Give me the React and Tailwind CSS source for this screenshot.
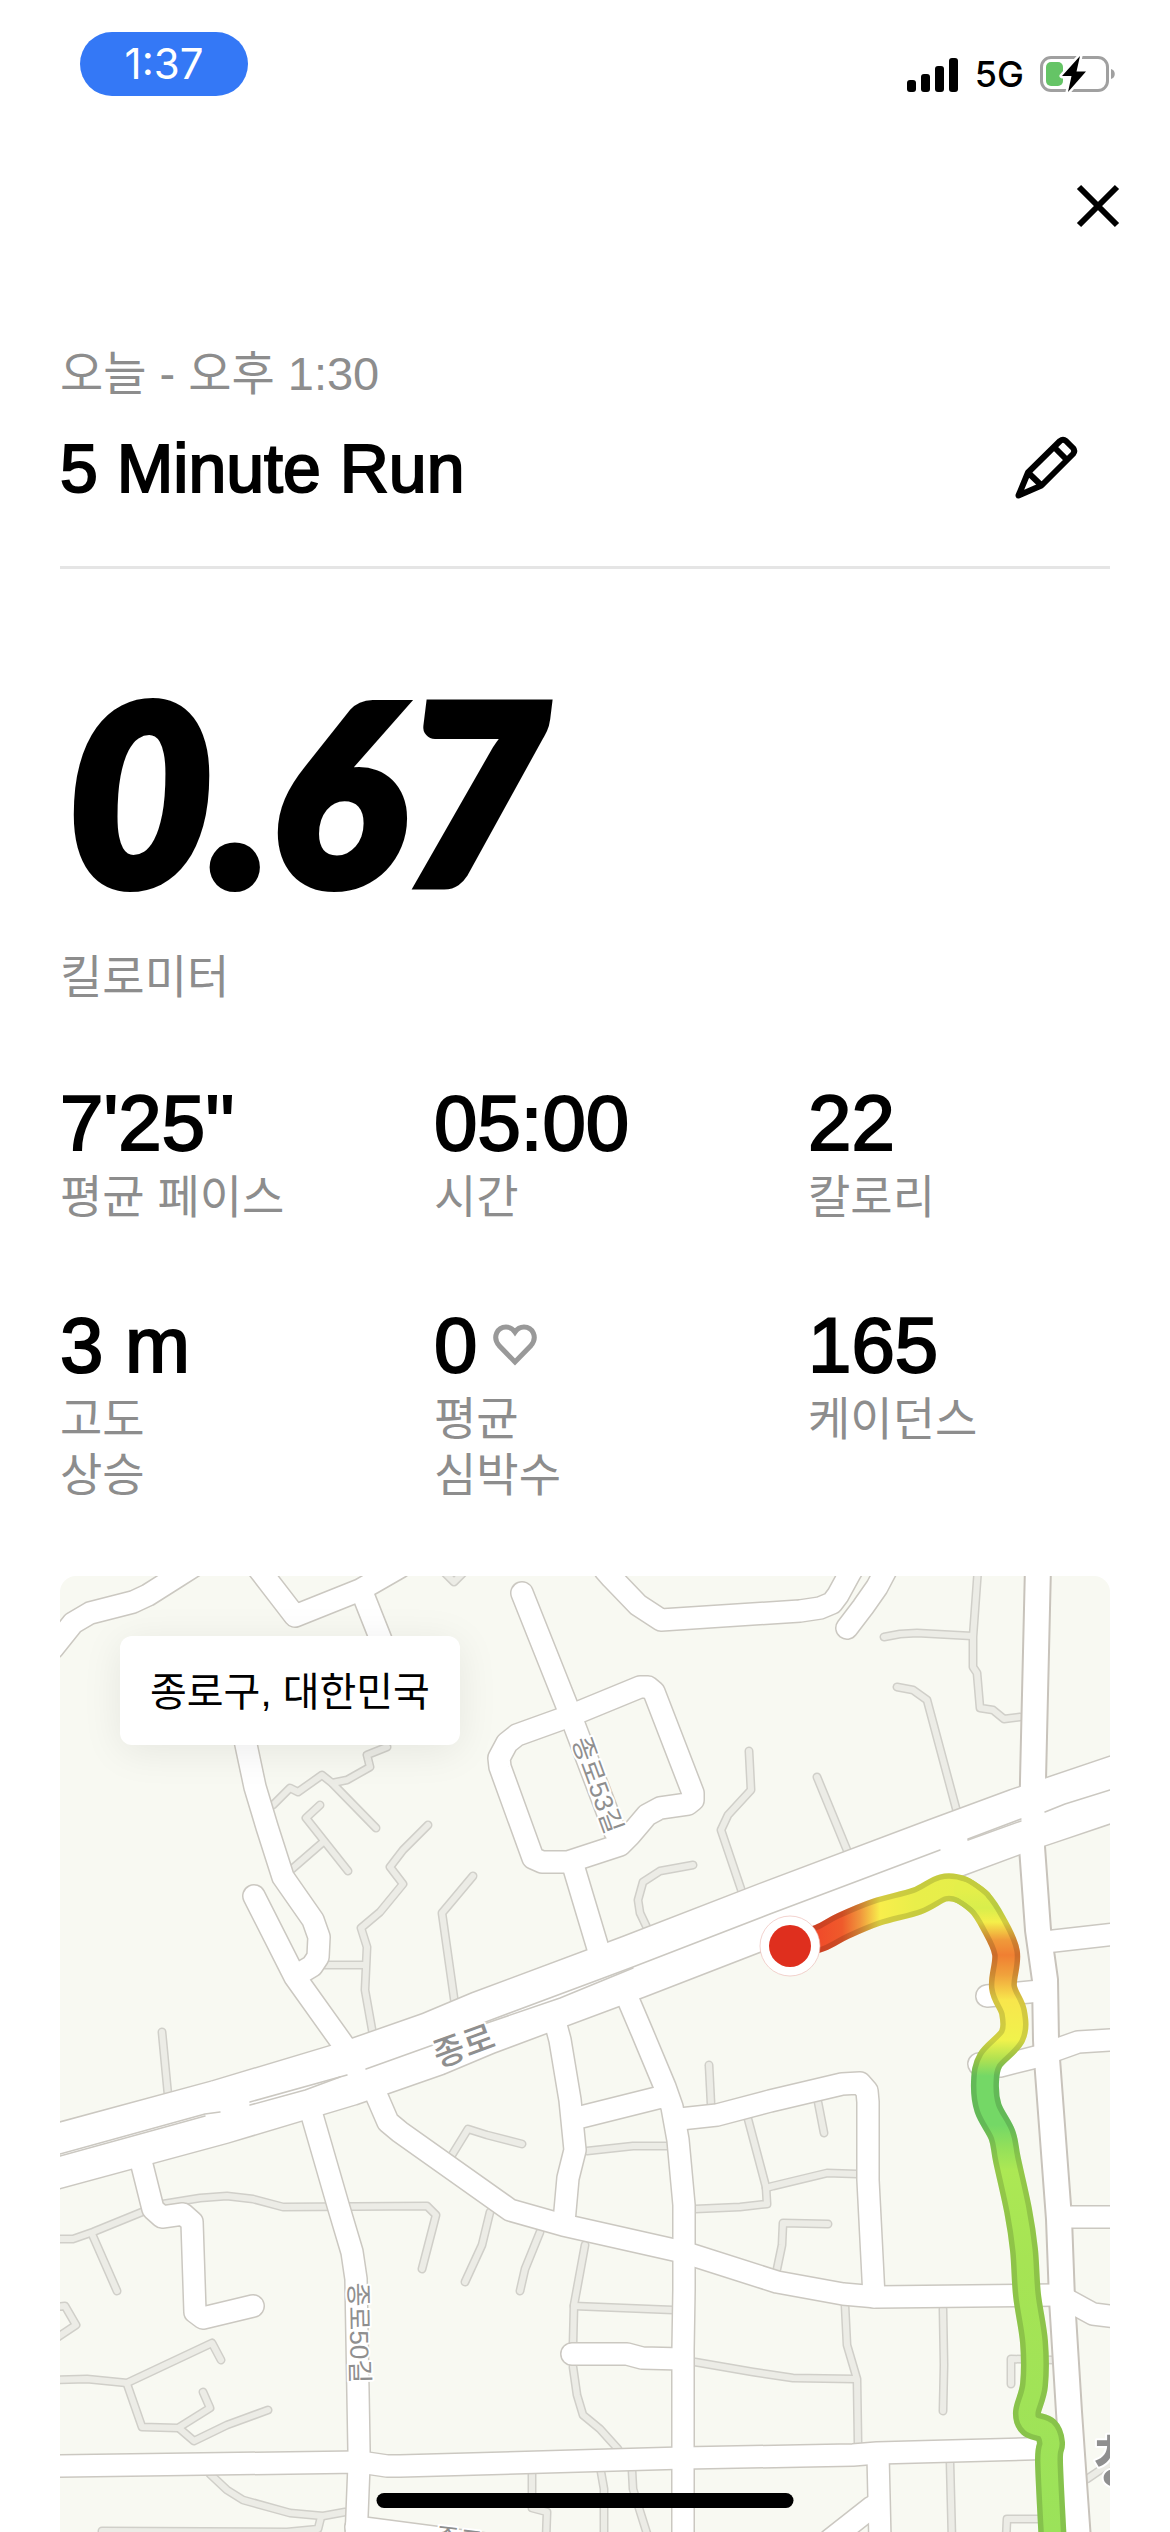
const stats = [
  { value: "7'25''", label: "평균 페이스" },
  { value: "05:00", label: "시간" },
  { value: "22", label: "칼로리" },
  { value: "3 m", label: "고도\n상승" },
  { value: "0", label: "평균\n심박수", heart: true },
  { value: "165", label: "케이던스" },
];

const alleys = [
  "273,1805 290,1788 298,1792 322,1775 332,1783 347,1780 370,1767 367,1755 387,1747",
  "333,1784 376,1828",
  "320,1805 306,1818 348,1871",
  "322,1843 292,1869",
  "428,1825 403,1850 390,1867 403,1884 380,1912 361,1928 367,1947 365,1990 373,2035",
  "325,1965 365,1965",
  "162,2032 168,2095",
  "440,1568 454,1582 468,1568",
  "473,1876 442,1913 455,2005",
  "749,1751 751,1790 728,1815 721,1830 743,1895",
  "693,1865 660,1871 643,1882 638,1900 640,1913 649,1932",
  "884,1637 900,1634 917,1633 972,1636",
  "978,1568 973,1637 973,1667 977,1673 980,1708 993,1710 1004,1719 1020,1717",
  "897,1687 913,1690 927,1700 957,1812",
  "817,1777 849,1855",
  "55,2239 73,2239 93,2232 147,2210",
  "92,2234 117,2291",
  "163,2204 200,2198 227,2196 253,2199 283,2207 427,2206 436,2215 422,2269",
  "55,2307 65,2306 76,2325 58,2337",
  "55,2380 87,2379 127,2383 212,2343 221,2360",
  "127,2384 142,2427 178,2428 210,2408 203,2392",
  "180,2429 194,2441 227,2425 268,2410",
  "210,2474 227,2490 243,2500 290,2513 323,2516 345,2512",
  "321,2517 318,2529 287,2532 102,2531",
  "452,2155 468,2129 487,2135 522,2144",
  "490,2212 482,2245 465,2282",
  "540,2232 525,2269 520,2291",
  "585,2245 574,2305 573,2345",
  "574,2306 673,2310",
  "573,2367 577,2395 583,2415 600,2429 618,2449",
  "587,2151 633,2146 667,2146",
  "709,2065 711,2104",
  "748,2119 766,2187 767,2204 740,2207 695,2209",
  "766,2188 773,2186 827,2173 857,2174",
  "777,2269 782,2245 783,2223 828,2224",
  "695,2362 753,2372 793,2378 855,2379",
  "845,2305 847,2345 857,2379 858,2443",
  "943,2309 944,2365 943,2411",
  "818,2102 824,2133",
  "1011,2384 1011,2359 1053,2360",
  "950,2462 952,2540",
  "1006,2540 1007,2519 1040,2519",
  "1087,2479 1115,2460",
  "532,2473 532,2508 547,2512 546,2540",
  "601,2472 604,2489 604,2540",
  "632,2470 633,2489 649,2540",
];

const streets = [
  "53,1648 73,1623 90,1613 133,1602 148,1595 178,1576 200,1562",
  "258,1568 295,1616 360,1590 400,1567",
  "362,1592 385,1650",
  "244,1700 245,1740 255,1787 267,1827 283,1877 313,1920 319,1937 318,1957 312,1966 297,1975",
  "254,1896 295,1977 345,2047 362,2072",
  "522,1593 567,1706 615,1832",
  "567,1717 640,1687 648,1687 654,1692 693,1793 693,1800 688,1804 660,1808 647,1815 630,1835 620,1845 568,1862 542,1862 533,1858 500,1767 499,1758 507,1743 517,1735 567,1717",
  "573,1865 600,1955",
  "605,1570 612,1578 638,1605 661,1620 800,1611 820,1608 832,1603 838,1595 850,1573 858,1560",
  "847,1628 863,1607 877,1587 887,1568",
  "137,2145 153,2209 162,2217 183,2214 192,2222 195,2312 203,2318 253,2306",
  "312,2115 338,2205 352,2252 356,2279 359,2450 359,2465 356,2540",
  "356,2527 440,2538 500,2546",
  "55,2466 360,2462 387,2466 400,2466 683,2458 800,2456 853,2455 877,2453 1060,2448",
  "372,2085 388,2122 400,2132 510,2210 563,2225 683,2252 777,2282 843,2294 877,2297 1055,2295",
  "552,2010 560,2040 570,2100 575,2150 568,2178 564,2222",
  "622,1985 642,2032 665,2087 672,2107 678,2140 684,2205 684,2290 683,2350 683,2540",
  "577,2118 665,2096",
  "680,2119 717,2115 770,2101 842,2084 860,2083 867,2091 868,2102 868,2180 874,2297",
  "878,2455 880,2540",
  "872,2507 830,2540",
  "572,2354 627,2354 642,2358 682,2359",
  "1045,1942 1125,1933",
  "1050,2052 1078,2042 1125,2039",
  "1065,2217 1125,2217",
  "1060,2296 1093,2314 1125,2318",
  "987,1996 1040,1991",
  "979,2064 1000,2066 1040,2056",
];

const avenue =
  "1038,1566 1033,1780 1032,1847 1038,1930 1045,1980 1046,2040 1047,2059 1059,2219 1062,2299 1069,2412 1078,2540";

const jongno =
  "50,2158 220,2112 347,2074 433,2044 483,2023 633,1967 770,1914 940,1850 1021,1820 1045,1812 1125,1785";

const jongnoMedian = [
  "60,2154 205,2114 220,2112",
  "60,2156 205,2116",
  "250,2102 347,2075",
  "250,2105 305,2090 340,2077",
  "366,2069 433,2045",
  "483,2023 633,1967 770,1914 940,1850",
  "484,2024 560,1998 633,1968",
  "968,1839 1021,1819",
  "968,1840 1021,1821",
  "1045,1812 1065,1804 1110,1790",
];

const routeWest = [
  [790, 1946],
  [820, 1938],
  [843, 1926],
  [877, 1912],
  [917, 1901],
  [943, 1888],
  [962, 1890],
  [979, 1902],
];

const routeSouth = [
  [962, 1890],
  [979, 1902],
  [993, 1923],
  [1006, 1953],
  [1003, 1987],
  [1013, 2012],
  [1012, 2036],
  [990, 2060],
  [985, 2082],
  [988, 2108],
  [1002, 2135],
  [1007, 2160],
  [1018, 2210],
  [1024, 2250],
  [1027, 2295],
  [1034, 2342],
  [1034, 2385],
  [1027, 2412],
  [1031, 2424],
  [1046, 2430],
  [1051, 2443],
  [1049, 2462],
  [1053, 2545],
];

const westColors = [
  [820, "#f04c2a"],
  [842, "#ef5a2b"],
  [860, "#f0953c"],
  [880, "#f8ee4c"],
  [915, "#e9ee4a"],
  [985, "#e4ef4a"],
];

const southColors = [
  [1890, "#e4ef4a"],
  [1908, "#d8ee4c"],
  [1922, "#f5ef4a"],
  [1940, "#f09a3a"],
  [1955, "#f07f32"],
  [1975, "#f0a23c"],
  [2000, "#f8e64c"],
  [2040, "#f0f24c"],
  [2058, "#b4e250"],
  [2076, "#74d866"],
  [2125, "#74d866"],
  [2148, "#94e05a"],
  [2170, "#ace854"],
  [2260, "#a6e454"],
  [2532, "#9be25a"],
];

// Catmull-Rom spline through the GPS points
const smoothPath = (points) => {
  let d = `M${points[0][0]} ${points[0][1]}`;
  for (let i = 0; i < points.length - 1; i++) {
    const p0 = points[i - 1] || points[i];
    const p1 = points[i];
    const p2 = points[i + 1];
    const p3 = points[i + 2] || p2;
    d += ` C${p1[0] + (p2[0] - p0[0]) / 6} ${p1[1] + (p2[1] - p0[1]) / 6}`;
    d += ` ${p2[0] - (p3[0] - p1[0]) / 6} ${p2[1] - (p3[1] - p1[1]) / 6}`;
    d += ` ${p2[0]} ${p2[1]}`;
  }
  return d;
};

const Lines = ({ items, color, width }) => (
  <g
    fill="none"
    stroke={color}
    strokeWidth={width}
    strokeLinecap="round"
    strokeLinejoin="round"
  >
    {items.map((points, index) => (
      <polyline key={index} points={points} />
    ))}
  </g>
);

const RunMap = () => {
  const west = smoothPath(routeWest);
  const south = smoothPath(routeSouth);
  return (
    <svg
      viewBox="60 1576 1050 956"
      className="block w-full h-auto rounded-t-2xl bg-[#f8f9f2]"
      role="img"
      aria-label="러닝 경로"
    >
      <defs>
        <linearGradient
          id="west"
          gradientUnits="userSpaceOnUse"
          x1="820"
          x2="985"
          y1="0"
          y2="0"
        >
          {westColors.map(([x, color]) => (
            <stop key={x} offset={(x - 820) / 165} stopColor={color} />
          ))}
        </linearGradient>
        <linearGradient
          id="south"
          gradientUnits="userSpaceOnUse"
          x1="0"
          x2="0"
          y1="1890"
          y2="2532"
        >
          {southColors.map(([y, color]) => (
            <stop key={y} offset={(y - 1890) / 642} stopColor={color} />
          ))}
        </linearGradient>
      </defs>

      <Lines items={alleys} color="#d0cfc9" width={9} />
      <Lines items={alleys} color="#ecece6" width={6} />
      <Lines items={streets} color="#cbc8c1" width={24} />
      <Lines items={[avenue]} color="#c8c3bb" width={28} />
      <Lines items={[jongno]} color="#cbc8c1" width={66} />
      <Lines items={streets} color="#ffffff" width={21} />
      <Lines items={[avenue]} color="#ffffff" width={24} />
      <Lines items={[jongno]} color="#ffffff" width={63} />
      <Lines items={jongnoMedian} color="#cbc8c1" width={1.5} />

      <g
        className="font-['Liberation_Sans','Noto_Sans_CJK_KR',sans-serif]"
        fill="#8f8f8f"
        stroke="#ffffff"
        strokeWidth="4"
        strokeLinejoin="round"
        paintOrder="stroke"
        textAnchor="middle"
      >
        <text
          fontSize="34"
          fontWeight="500"
          transform="translate(468 2057) rotate(-20)"
        >
          종로
        </text>
        <text fontSize="26" transform="translate(589 1788) rotate(70)">
          종로53길
        </text>
        <text fontSize="26" transform="translate(350 2333) rotate(89)">
          종로50길
        </text>
        <text fontSize="26" transform="translate(484 2552) rotate(7)">
          종로48길
        </text>
        <text fontSize="56" fontWeight="700" x="1119" y="2482">
          청
        </text>
      </g>

      <g fill="none" strokeLinecap="round" strokeLinejoin="round">
        <path d={west} stroke="url(#west)" strokeWidth="28" />
        <path d={south} stroke="url(#south)" strokeWidth="28" />
        <g opacity="0.14">
          <path d={west} stroke="#000000" strokeWidth="28" />
          <path d={south} stroke="#000000" strokeWidth="28" />
        </g>
        <path d={west} stroke="url(#west)" strokeWidth="17" />
        <path d={south} stroke="url(#south)" strokeWidth="17" />
      </g>
      <circle
        cx="790"
        cy="1946"
        r="30"
        fill="#ffffff"
        stroke="#e9b3ad"
        strokeWidth="0.6"
      />
      <circle cx="790" cy="1946" r="21" fill="#df2f1e" />
    </svg>
  );
};

const StatusBar = () => (
  <header className="flex items-end justify-between pt-8 pl-20 pr-[54px] font-['Inter',sans-serif]">
    <div className="flex h-16 w-[168px] items-center justify-center rounded-full bg-[#3478f6] text-[42px] leading-none text-white">
      1:37
    </div>
    <div className="flex items-center pb-[3px] text-black">
      <svg width="52" height="36" viewBox="0 0 52 36" aria-hidden="true">
        <rect x="0" y="24" width="9" height="12" rx="3" />
        <rect x="14" y="18" width="9" height="18" rx="3" />
        <rect x="28" y="10" width="9" height="26" rx="3" />
        <rect x="42" y="2" width="9" height="34" rx="3" />
      </svg>
      <span className="mx-4 text-[36px] font-medium leading-9">5G</span>
      <svg width="76" height="38" viewBox="0 0 76 38" aria-hidden="true">
        <rect
          x="1.5"
          y="2.5"
          width="66"
          height="33"
          rx="9.5"
          fill="none"
          stroke="#a0a0a0"
          strokeWidth="3"
        />
        <path d="M71 14c5 1 5 9 0 10z" fill="#a0a0a0" />
        <rect x="6" y="7" width="17" height="24" rx="5" fill="#65c466" />
        <path
          d="M40 1L22 21H31.500L28 37L46 16.500H36.500z"
          fill="#000000"
          stroke="#ffffff"
          strokeWidth="5"
          strokeLinejoin="round"
          paintOrder="stroke"
        />
      </svg>
    </div>
  </header>
);

const App = () => {
  return (
    <div className="relative min-h-screen bg-white text-black font-['Liberation_Sans','Noto_Sans_CJK_KR',sans-serif]">
      <StatusBar />
      <div className="flex justify-end pr-6 pt-[62px]">
        <button
          type="button"
          aria-label="닫기"
          className="flex size-24 items-center justify-center"
        >
          <svg width="44" height="44" viewBox="0 0 44 44" aria-hidden="true">
            <path
              d="M3 3L41 41M41 3L3 41"
              fill="none"
              stroke="currentColor"
              strokeWidth="6"
            />
          </svg>
        </button>
      </div>

      <main className="px-[60px] pt-[90px]">
        <p className="text-[47px] leading-[60px] text-[#8d8d8d]">
          오늘 - 오후 1:30
        </p>
        <div className="mt-4 flex items-center justify-between border-b-[3px] border-[#e5e5e5] pb-[50px]">
          <h1 className="text-[68px] leading-[80px] [-webkit-text-stroke:2px_black]">
            5 Minute Run
          </h1>
          <button
            type="button"
            aria-label="이름 수정"
            className="mr-4 flex size-24 items-center justify-center"
          >
            <svg width="64" height="64" viewBox="0 0 64 64" aria-hidden="true">
              <path
                d="M4.500 59.500L14 36.500L46 5Q49 2.500 52 5L59 12Q61.500 15 59 18L27.500 49.500zM14 36.500L27.500 49.500M40 11L53 24"
                fill="none"
                stroke="currentColor"
                strokeWidth="6"
                strokeLinejoin="round"
              />
            </svg>
          </button>
        </div>

        <p className="mt-[100px] pl-2 font-['Lato',sans-serif] text-[248px] font-black italic leading-[240px] [-webkit-text-stroke:10px_black]">
          0.67
        </p>
        <p className="mt-10 text-[46px] leading-[56px] text-[#8d8d8d]">
          킬로미터
        </p>

        <dl className="mt-[72px] grid grid-cols-3 gap-x-[72px] gap-y-[74px]">
          {stats.map((item, index) => (
            <div key={index} className="flex flex-col-reverse justify-end">
              <dt className="whitespace-pre-line text-[46px] leading-[56px] text-[#8d8d8d]">
                {item.label}
              </dt>
              <dd className="flex items-center gap-4 text-[78px] leading-[92px] [-webkit-text-stroke:2px_black]">
                {item.value}
                {item.heart && (
                  <svg
                    width="44"
                    height="42"
                    viewBox="0 0 44 42"
                    aria-hidden="true"
                  >
                    <path
                      d="M22 38L6 21.500C-1 13 4.500 3 13 3C17.500 3 20 5 22 8C24 5 26.500 3 31 3C39.500 3 45 13 38 21.500z"
                      fill="none"
                      stroke="#999999"
                      strokeWidth="5"
                    />
                  </svg>
                )}
              </dd>
            </div>
          ))}
        </dl>

        <section className="relative mt-[73px]">
          <RunMap />
          <p className="absolute left-[60px] top-[60px] rounded-xl bg-white px-[30px] pt-7 pb-6 text-[40px] leading-[57px] shadow-[0_6px_40px_rgba(0,0,0,0.08)]">
            종로구, 대한민국
          </p>
        </section>
      </main>

      <div className="fixed bottom-6 left-1/2 h-[15px] w-[417px] -translate-x-1/2 rounded-full bg-black"></div>
    </div>
  );
};

export default App;
